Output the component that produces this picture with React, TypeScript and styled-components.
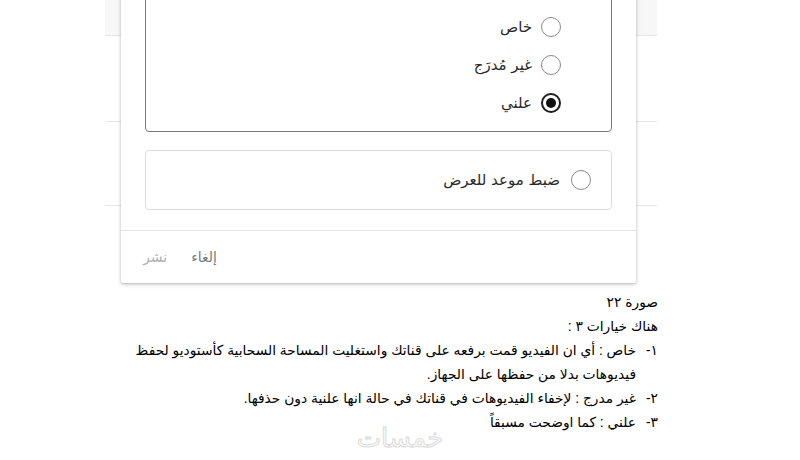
import React from "react";
import styled, { createGlobalStyle } from "styled-components";

const Global = createGlobalStyle`
  html, body { margin: 0; padding: 0; background: #fff; }
  body { width: 800px; height: 460px; overflow: hidden; font-family: "Liberation Sans", "DejaVu Sans", sans-serif; }
`;

const Page = styled.div`
  width: 800px;
  height: 460px;
  display: flex;
  flex-direction: column;
  & > * { flex-shrink: 0; }
`;

const Shot = styled.div`
  position: relative;
  height: 284px;
  padding-left: 105px;
`;

const BackColumn = styled.div`
  width: 552px;
  display: flex;
  flex-direction: column;
`;

const BackRow = styled.div<{ $h: number; $bg?: string }>`
  height: ${(p) => p.$h}px;
  background: ${(p) => p.$bg || "transparent"};
  border-bottom: 1px solid #e6e6e6;
`;

const Dialog = styled.div`
  position: absolute;
  left: 121px;
  top: -40px;
  width: 515px;
  height: 323px;
  background: #fff;
  box-shadow: 0 1px 3px rgba(0, 0, 0, 0.25), 0 2px 6px rgba(0, 0, 0, 0.08);
  border-radius: 2px;
  display: flex;
  flex-direction: column;
  direction: rtl;
  font-family: "DejaVu Sans", "Noto Sans", sans-serif;
`;

const Body = styled.div`
  padding: 24px 24px 0;
  display: flex;
  flex-direction: column;
`;

const Box = styled.div<{ $dark?: boolean }>`
  border: 1px solid ${(p) => (p.$dark ? "#7a7a7a" : "#dcdcdc")};
  border-radius: 4px;
  display: flex;
  flex-direction: column;
`;

const VisBox = styled(Box)`
  height: 148px;
  padding: 23px 50px 0 0;
  box-sizing: border-box;
`;

const ScheduleBox = styled(Box)`
  margin-top: 18px;
  height: 60px;
  box-sizing: border-box;
  padding-right: 20px;
  justify-content: center;
`;

const Row = styled.label<{ $gap?: number }>`
  height: 38px;
  display: flex;
  align-items: center;
  gap: ${(p) => p.$gap ?? 9}px;
  font-size: 15px;
  color: #2a2a2a;
`;

const Radio = styled.span<{ $on?: boolean }>`
  width: 20px;
  height: 20px;
  box-sizing: border-box;
  border-radius: 50%;
  border: ${(p) => (p.$on ? "2px solid #1e1e1e" : "1.5px solid #8a8a8a")};
  display: flex;
  align-items: center;
  justify-content: center;
  flex: none;
  &::after {
    content: "";
    width: 10px;
    height: 10px;
    border-radius: 50%;
    background: #111;
    display: ${(p) => (p.$on ? "block" : "none")};
  }
`;

const Footer = styled.div`
  margin-top: 20px;
  border-top: 1px solid #e4e4e4;
  flex: 1;
  display: flex;
  align-items: center;
  justify-content: flex-end;
  gap: 24px;
  padding-left: 22px;
  font-size: 14px;
`;

const FootBtn = styled.span<{ $muted?: boolean }>`
  color: ${(p) => (p.$muted ? "#b0b0b0" : "#7a7a7a")};
`;

const Doc = styled.div`
  direction: rtl;
  padding: 7px 142px 0 0;
  font-family: "Liberation Sans", "DejaVu Sans", sans-serif;
  font-size: 13.8px;
  line-height: 24px;
  color: #000;
  display: flex;
  flex-direction: column;
`;

const Item = styled.div`
  display: grid;
  grid-template-columns: 22px auto;
  white-space: nowrap;
`;

const Mark = styled.span``;

const Watermark = styled.div`
  align-self: center;
  margin-top: -11px;
  direction: rtl;
  font-family: "DejaVu Sans", sans-serif;
  font-size: 26px;
  line-height: 28px;
  color: #fafafa;
  -webkit-text-stroke: 1px #dcdcdc;
`;

export default function App() {
  return (
    <>
      <Global />
      <Page>
        <Shot>
          <BackColumn>
            <BackRow $h={35} $bg="#f7f7f7" />
            <BackRow $h={85} />
            <BackRow $h={83} />
          </BackColumn>
          <Dialog>
            <Body>
              <VisBox $dark>
                <Row>
                  <Radio />
                  <span>خاص</span>
                </Row>
                <Row>
                  <Radio />
                  <span>غير مُدرَج</span>
                </Row>
                <Row>
                  <Radio $on />
                  <span>علني</span>
                </Row>
              </VisBox>
              <ScheduleBox>
                <Row $gap={11}>
                  <Radio />
                  <span>ضبط موعد للعرض</span>
                </Row>
              </ScheduleBox>
            </Body>
            <Footer>
              <FootBtn>إلغاء</FootBtn>
              <FootBtn $muted>نشر</FootBtn>
            </Footer>
          </Dialog>
        </Shot>
        <Doc>
          <div>صورة ٢٢</div>
          <div>هناك خيارات ٣ :</div>
          <Item>
            <Mark>١-</Mark>
            <span>
              خاص : أي ان الفيديو قمت برفعه على قناتك واستغليت المساحة السحابية كأستوديو لحفظ
              <br />
              فيديوهات بدلا من حفظها على الجهاز.
            </span>
          </Item>
          <Item>
            <Mark>٢-</Mark>
            <span>غير مدرج : لإخفاء الفيديوهات في قناتك في حالة انها علنية دون حذفها.</span>
          </Item>
          <Item>
            <Mark>٣-</Mark>
            <span>علني : كما اوضحت مسبقاً</span>
          </Item>
        </Doc>
        <Watermark>خمسات</Watermark>
      </Page>
    </>
  );
}
